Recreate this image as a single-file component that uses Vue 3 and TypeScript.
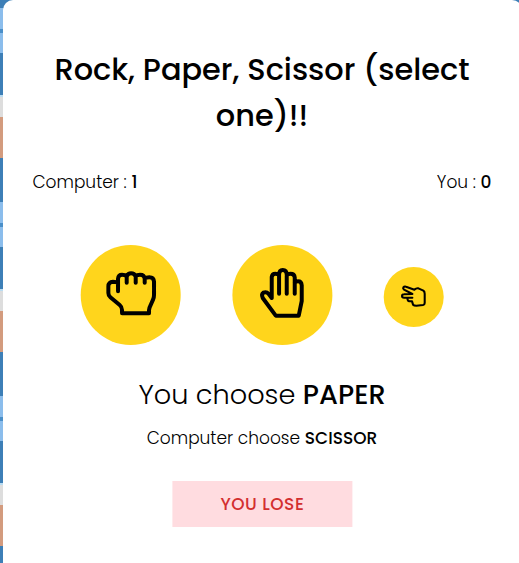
<script setup lang="ts">
import { ref } from 'vue'

type Choice = 'rock' | 'paper' | 'scissor'

interface Hand {
  id: Choice
  viewBox: string
  path: string
  stroke: number
}

const hands: Hand[] = [
  {
    id: 'rock',
    viewBox: '2 3 300 300',
    stroke: 12,
    path: 'M114 142V117Q110 113 99 113Q85 114 85 127V147Q85 155 91 160L119 183Q126 189 126 198V208H207V198Q208 190 212 183L219 167Q222 160 222 152V113Q221 100 208 100Q198 100 194 104V116M114 117V104Q115 92 126 92Q135 92 140 97V116M140 97Q144 88 153 88Q163 88 167 97V116M167 97Q171 92 180 92Q193 92 194 104',
  },
  {
    id: 'paper',
    viewBox: '4 3 300 300',
    stroke: 12,
    path: 'M122 162L113 150Q106 142 97 146Q90 151 95 162L134 215H203L212 171V124Q211 112 201 112Q195 112 191 116M122 162V99Q123 89 133 89Q140 89 144 93V149M144 93Q144 78 155 78Q167 78 167 93V149M167 93Q171 89 178 89Q190 89 191 100V149',
  },
  {
    id: 'scissor',
    viewBox: '11 15 180 180',
    stroke: 6.2,
    path: 'M97 107H72Q66 107 66 102Q66 97 72 97L97 96L72 83Q68 80 70 76Q73 72 78 74L103 83Q109 78 115 79L130 86Q134 89 134 95V123Q134 128 129 129L109 131Q102 131 99 128L96 118H88Q82 117 82 107',
  },
]

const scores = ref({ computer: 1, you: 0 })
const userChoice = ref<Choice>('paper')
const computerChoice = ref<Choice>('scissor')
const verdict = ref('YOU LOSE')

const beats: Record<Choice, Choice> = { rock: 'scissor', paper: 'rock', scissor: 'paper' }

function play(choice: Choice) {
  userChoice.value = choice
  computerChoice.value = hands[Math.floor(Math.random() * hands.length)].id
  if (choice === computerChoice.value) {
    verdict.value = 'DRAW'
  } else if (beats[choice] === computerChoice.value) {
    scores.value.you++
    verdict.value = 'YOU WIN'
  } else {
    scores.value.computer++
    verdict.value = 'YOU LOSE'
  }
}
</script>

<template>
  <div class="page">
    <main class="card">
      <h1 class="title">Rock, Paper, Scissor (select one)!!</h1>
      <div class="scores">
        <p class="computer-score">Computer : <b>{{ scores.computer }}</b></p>
        <p class="user-score">You : <b>{{ scores.you }}</b></p>
      </div>
      <div class="hands">
        <button
          v-for="hand in hands"
          :key="hand.id"
          class="hand"
          :class="{ small: hand.id === computerChoice }"
          :aria-label="hand.id"
          @click="play(hand.id)"
        >
          <svg :viewBox="hand.viewBox">
            <path :d="hand.path" :stroke-width="hand.stroke" />
          </svg>
        </button>
      </div>
      <p class="user-pick"><span>You choose</span> <b>{{ userChoice.toUpperCase() }}</b></p>
      <p class="computer-pick"><span>Computer choose</span> <b>{{ computerChoice.toUpperCase() }}</b></p>
      <div class="verdict">{{ verdict }}</div>
    </main>
  </div>
</template>

<style>
body {
  overflow: hidden;
}
</style>

<style scoped>
.page {
  box-sizing: border-box;
  height: 563px;
  padding-left: 2.5px;
  overflow: hidden;
  background: repeating-linear-gradient(
    #8bbdec 0 21px,
    #4a8fc9 21px 25px,
    #8bbdec 25px 45px,
    #3d7fb7 45px 87px,
    #b9dcf2 87px 89px,
    #dddddd 89px 109px,
    #d39b7e 109px 150px,
    #3d7fb7 150px 194px
  ) 0 8px / 100% 582px, #3d8bc8;
  font-family: Poppins, Inter, sans-serif;
  color: #000;
}
.card {
  box-sizing: border-box;
  display: flex;
  flex-direction: column;
  align-items: center;
  width: 519px;
  height: 600px;
  padding: 47px 30px 30px;
  border-radius: 10px;
  background: #fff;
}
.title {
  width: 459px;
  margin: 0;
  font-size: 30.4px;
  line-height: 46px;
  font-weight: 500;
  text-align: center;
}
.scores {
  display: flex;
  justify-content: space-between;
  width: 100%;
  margin-top: 30px;
}
p {
  margin: 0;
  font-size: 17px;
  line-height: 26px;
  font-weight: 300;
  white-space: nowrap;
}
b {
  font-weight: 500;
}
.hands {
  display: flex;
  justify-content: center;
  align-items: center;
  gap: 51.5px;
  width: 458px;
  height: 100px;
  margin-top: 50px;
}
.hand {
  width: 100px;
  height: 100px;
  padding: 0;
  border: 0;
  border-radius: 50%;
  background: #ffd51c;
  transform: translateX(-0.3px);
}
.hand:nth-child(2) {
  transform: translateX(0.4px);
}
.hand.small {
  width: 60px;
  height: 60px;
  margin-top: 4px;
}
svg {
  display: block;
  width: 100%;
  height: 100%;
  fill: none;
  stroke: #000;
  stroke-linecap: round;
  stroke-linejoin: round;
}
.user-pick {
  margin-top: 30px;
  font-size: 27.2px;
  line-height: 40px;
}
.computer-pick {
  margin-top: 10px;
}
.verdict {
  width: 180px;
  height: 46px;
  margin-top: 30px;
  background: #ffdce0;
  color: #d32f2f;
  font-size: 17px;
  line-height: 46px;
  font-weight: 500;
  letter-spacing: 0.5px;
  text-align: center;
  transform: translateX(0.4px);
}
</style>
